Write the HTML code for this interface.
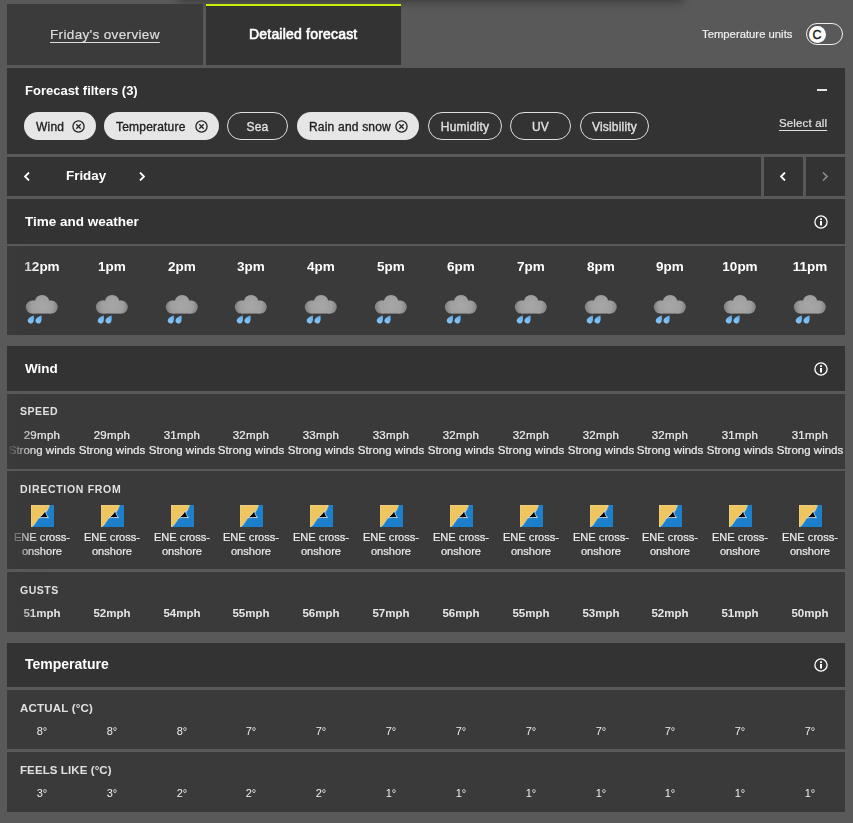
<!DOCTYPE html>
<html><head><meta charset="utf-8"><title>Detailed forecast</title><style>
*{box-sizing:border-box;margin:0;padding:0}
html,body{width:853px;height:823px;overflow:hidden;background:#595959;font-family:"Liberation Sans", sans-serif;}
body{position:relative}
.t,.c,.chip{will-change:transform}
.rs{-webkit-text-stroke:0.2px currentColor}
.a{position:absolute}
.dark{background:#333333}
.row{background:#3a3a3a}
.t{position:absolute;white-space:nowrap;line-height:1}
.c{position:absolute;white-space:nowrap;line-height:1;text-align:center}
.lab{z-index:2}
.fade{z-index:1;position:absolute;left:7px;width:42px;background:linear-gradient(to right,rgba(58,58,58,0.95) 0px,rgba(58,58,58,0.78) 6px,rgba(58,58,58,0.55) 12px,rgba(58,58,58,0.3) 18px,rgba(58,58,58,0.13) 25px,rgba(58,58,58,0.04) 32px,rgba(58,58,58,0) 40px)}
.chip{position:absolute;top:112px;height:28px;border-radius:14px;font-size:12px;line-height:31px;letter-spacing:0.2px;white-space:nowrap;-webkit-text-stroke:0.35px currentColor}
.sel{background:#e6e6e6;color:#222}
.uns{border:1px solid #e0e0e0;color:#e0e0e0;text-align:center;line-height:29px}
</style></head><body>
<div class="a" style="left:178px;top:-12px;width:505px;height:12px;box-shadow:0 2px 8px rgba(0,0,0,0.35);background:#595959"></div>
<div class="a" style="left:7px;top:4px;width:196px;height:61px;background:#3b3b3b"></div>
<div class="t rs" style="left:50px;top:28px;font-size:13.5px;letter-spacing:0.35px;color:#dedede;text-decoration:underline;text-underline-offset:3px">Friday's overview</div>
<div class="a dark" style="left:206px;top:4px;width:195px;height:61px"></div>
<div class="a" style="left:206px;top:4px;width:195px;height:2px;background:#c8f000"></div>
<div class="t" style="left:249px;top:27px;font-size:14px;letter-spacing:0.2px;-webkit-text-stroke:0.6px #fff;color:#fff">Detailed forecast</div>
<div class="t rs" style="left:702px;top:29px;font-size:11.3px;color:#eee">Temperature units</div>
<div class="a" style="left:806px;top:23px;width:37px;height:22px;border:1.5px solid #eee;border-radius:11px"></div>
<div class="a" style="left:808.5px;top:25.5px;width:17px;height:17px;border-radius:50%;background:#fff;color:#222;font-size:12.5px;text-align:center;line-height:18px;-webkit-text-stroke:0.4px #222">C</div>
<div class="a dark" style="left:7px;top:68px;width:838px;height:86px"></div>
<div class="t" style="left:25px;top:84px;font-size:13px;color:#fff;font-weight:bold">Forecast filters (3)</div>
<div class="a" style="left:817px;top:89px;width:10px;height:2px;background:#e6e6e6"></div>
<div class="chip sel" style="left:24px;width:72px;padding-left:12px">Wind<svg width="13" height="13" viewBox="0 0 13 13" style="position:absolute;top:7.5px;right:11.5px"><circle cx="6.5" cy="6.5" r="5.6" fill="none" stroke="#222" stroke-width="1.3"/><path d="M4.3 4.3L8.7 8.7M8.7 4.3L4.3 8.7" stroke="#222" stroke-width="1.3"/></svg></div>
<div class="chip sel" style="left:104px;width:115px;padding-left:12px">Temperature<svg width="13" height="13" viewBox="0 0 13 13" style="position:absolute;top:7.5px;right:11.5px"><circle cx="6.5" cy="6.5" r="5.6" fill="none" stroke="#222" stroke-width="1.3"/><path d="M4.3 4.3L8.7 8.7M8.7 4.3L4.3 8.7" stroke="#222" stroke-width="1.3"/></svg></div>
<div class="chip uns" style="left:227px;width:61px">Sea</div>
<div class="chip sel" style="left:297px;width:122px;padding-left:12px">Rain and snow<svg width="13" height="13" viewBox="0 0 13 13" style="position:absolute;top:7.5px;right:11.5px"><circle cx="6.5" cy="6.5" r="5.6" fill="none" stroke="#222" stroke-width="1.3"/><path d="M4.3 4.3L8.7 8.7M8.7 4.3L4.3 8.7" stroke="#222" stroke-width="1.3"/></svg></div>
<div class="chip uns" style="left:428px;width:74px">Humidity</div>
<div class="chip uns" style="left:510px;width:61px">UV</div>
<div class="chip uns" style="left:580px;width:69px">Visibility</div>
<div class="t rs" style="left:779px;top:118px;font-size:11.5px;letter-spacing:0.15px;color:#e0e0e0;text-decoration:underline;text-underline-offset:3px">Select all</div>
<div class="a dark" style="left:7px;top:157px;width:754px;height:39px"></div>
<div class="a dark" style="left:764px;top:157px;width:39px;height:39px"></div>
<div class="a dark" style="left:806px;top:157px;width:39px;height:39px"></div>
<svg class="a" style="left:24px;top:172px" width="6" height="9" viewBox="0 0 6 9"><path d="M5 0.5L1 4.5L5 8.5" fill="none" stroke="#fff" stroke-width="1.8"/></svg>
<div class="t" style="left:65.5px;top:169px;font-size:13.4px;color:#fff;font-weight:bold">Friday</div>
<svg class="a" style="left:139px;top:172px" width="6" height="9" viewBox="0 0 6 9"><path d="M1 0.5L5 4.5L1 8.5" fill="none" stroke="#fff" stroke-width="1.8"/></svg>
<svg class="a" style="left:779.8px;top:172.3px" width="6" height="9" viewBox="0 0 6 9"><path d="M5 0.5L1 4.5L5 8.5" fill="none" stroke="#fff" stroke-width="1.8"/></svg>
<svg class="a" style="left:821.8px;top:172.3px" width="6" height="9" viewBox="0 0 6 9"><path d="M1 0.5L5 4.5L1 8.5" fill="none" stroke="#8a8a8a" stroke-width="1.6"/></svg>
<div class="a dark" style="left:7px;top:199px;width:838px;height:45px"></div>
<div class="t" style="left:25px;top:215px;font-size:13.5px;color:#fff;font-weight:bold">Time and weather</div>
<svg class="a" style="left:814px;top:214.5px" width="14" height="14" viewBox="0 0 14 14"><circle cx="7" cy="7" r="6.1" fill="none" stroke="#fff" stroke-width="1.3"/><rect x="6" y="3.3" width="2" height="1.6" fill="#fff"/><rect x="6" y="5.9" width="2" height="4.6" fill="#fff"/></svg>
<div class="a row" style="left:7px;top:246px;width:838px;height:89px"></div>
<div class="c" style="left:6.92px;width:70px;top:260px;font-size:13.5px;color:#fff;font-weight:bold">12pm</div>
<svg width="36" height="32" viewBox="0 0 36 32" class="a" style="left:24.92px;top:294px;z-index:2">
<defs><radialGradient id="cg0" gradientUnits="userSpaceOnUse" cx="17" cy="12" r="17"><stop offset="0" stop-color="#a8a8a8"/><stop offset="0.65" stop-color="#9e9e9e"/><stop offset="1" stop-color="#7a7a7a"/></radialGradient>
<linearGradient id="dg0" x1="0" y1="0" x2="0" y2="1"><stop offset="0" stop-color="#5eaaec"/><stop offset="1" stop-color="#8ac6f4"/></linearGradient></defs>
<g fill="url(#cg0)"><circle cx="7.3" cy="13.1" r="6.5"/><circle cx="26.3" cy="13.1" r="6.5"/><circle cx="17.1" cy="8.3" r="7.4"/><rect x="7.3" y="6.6" width="19" height="13"/></g>
<path d="M0 -5.8 C0.9 -4 2.9 -2.3 2.9 0.3 A2.9 2.9 0 0 1 -2.9 0.3 C-2.9 -2.3 -0.9 -4 0 -5.8Z" fill="url(#dg0)" transform="translate(5.9 26.3) rotate(30)"/>
<path d="M0 -5.8 C0.9 -4 2.9 -2.3 2.9 0.3 A2.9 2.9 0 0 1 -2.9 0.3 C-2.9 -2.3 -0.9 -4 0 -5.8Z" fill="url(#dg0)" transform="translate(13.6 26.3) rotate(30)"/>
</svg>
<div class="c" style="left:76.75px;width:70px;top:260px;font-size:13.5px;color:#fff;font-weight:bold">1pm</div>
<svg width="36" height="32" viewBox="0 0 36 32" class="a" style="left:94.75px;top:294px;z-index:2">
<defs><radialGradient id="cg1" gradientUnits="userSpaceOnUse" cx="17" cy="12" r="17"><stop offset="0" stop-color="#a8a8a8"/><stop offset="0.65" stop-color="#9e9e9e"/><stop offset="1" stop-color="#7a7a7a"/></radialGradient>
<linearGradient id="dg1" x1="0" y1="0" x2="0" y2="1"><stop offset="0" stop-color="#5eaaec"/><stop offset="1" stop-color="#8ac6f4"/></linearGradient></defs>
<g fill="url(#cg1)"><circle cx="7.3" cy="13.1" r="6.5"/><circle cx="26.3" cy="13.1" r="6.5"/><circle cx="17.1" cy="8.3" r="7.4"/><rect x="7.3" y="6.6" width="19" height="13"/></g>
<path d="M0 -5.8 C0.9 -4 2.9 -2.3 2.9 0.3 A2.9 2.9 0 0 1 -2.9 0.3 C-2.9 -2.3 -0.9 -4 0 -5.8Z" fill="url(#dg1)" transform="translate(5.9 26.3) rotate(30)"/>
<path d="M0 -5.8 C0.9 -4 2.9 -2.3 2.9 0.3 A2.9 2.9 0 0 1 -2.9 0.3 C-2.9 -2.3 -0.9 -4 0 -5.8Z" fill="url(#dg1)" transform="translate(13.6 26.3) rotate(30)"/>
</svg>
<div class="c" style="left:146.58px;width:70px;top:260px;font-size:13.5px;color:#fff;font-weight:bold">2pm</div>
<svg width="36" height="32" viewBox="0 0 36 32" class="a" style="left:164.58px;top:294px;z-index:2">
<defs><radialGradient id="cg2" gradientUnits="userSpaceOnUse" cx="17" cy="12" r="17"><stop offset="0" stop-color="#a8a8a8"/><stop offset="0.65" stop-color="#9e9e9e"/><stop offset="1" stop-color="#7a7a7a"/></radialGradient>
<linearGradient id="dg2" x1="0" y1="0" x2="0" y2="1"><stop offset="0" stop-color="#5eaaec"/><stop offset="1" stop-color="#8ac6f4"/></linearGradient></defs>
<g fill="url(#cg2)"><circle cx="7.3" cy="13.1" r="6.5"/><circle cx="26.3" cy="13.1" r="6.5"/><circle cx="17.1" cy="8.3" r="7.4"/><rect x="7.3" y="6.6" width="19" height="13"/></g>
<path d="M0 -5.8 C0.9 -4 2.9 -2.3 2.9 0.3 A2.9 2.9 0 0 1 -2.9 0.3 C-2.9 -2.3 -0.9 -4 0 -5.8Z" fill="url(#dg2)" transform="translate(5.9 26.3) rotate(30)"/>
<path d="M0 -5.8 C0.9 -4 2.9 -2.3 2.9 0.3 A2.9 2.9 0 0 1 -2.9 0.3 C-2.9 -2.3 -0.9 -4 0 -5.8Z" fill="url(#dg2)" transform="translate(13.6 26.3) rotate(30)"/>
</svg>
<div class="c" style="left:216.42px;width:70px;top:260px;font-size:13.5px;color:#fff;font-weight:bold">3pm</div>
<svg width="36" height="32" viewBox="0 0 36 32" class="a" style="left:234.42px;top:294px;z-index:2">
<defs><radialGradient id="cg3" gradientUnits="userSpaceOnUse" cx="17" cy="12" r="17"><stop offset="0" stop-color="#a8a8a8"/><stop offset="0.65" stop-color="#9e9e9e"/><stop offset="1" stop-color="#7a7a7a"/></radialGradient>
<linearGradient id="dg3" x1="0" y1="0" x2="0" y2="1"><stop offset="0" stop-color="#5eaaec"/><stop offset="1" stop-color="#8ac6f4"/></linearGradient></defs>
<g fill="url(#cg3)"><circle cx="7.3" cy="13.1" r="6.5"/><circle cx="26.3" cy="13.1" r="6.5"/><circle cx="17.1" cy="8.3" r="7.4"/><rect x="7.3" y="6.6" width="19" height="13"/></g>
<path d="M0 -5.8 C0.9 -4 2.9 -2.3 2.9 0.3 A2.9 2.9 0 0 1 -2.9 0.3 C-2.9 -2.3 -0.9 -4 0 -5.8Z" fill="url(#dg3)" transform="translate(5.9 26.3) rotate(30)"/>
<path d="M0 -5.8 C0.9 -4 2.9 -2.3 2.9 0.3 A2.9 2.9 0 0 1 -2.9 0.3 C-2.9 -2.3 -0.9 -4 0 -5.8Z" fill="url(#dg3)" transform="translate(13.6 26.3) rotate(30)"/>
</svg>
<div class="c" style="left:286.25px;width:70px;top:260px;font-size:13.5px;color:#fff;font-weight:bold">4pm</div>
<svg width="36" height="32" viewBox="0 0 36 32" class="a" style="left:304.25px;top:294px;z-index:2">
<defs><radialGradient id="cg4" gradientUnits="userSpaceOnUse" cx="17" cy="12" r="17"><stop offset="0" stop-color="#a8a8a8"/><stop offset="0.65" stop-color="#9e9e9e"/><stop offset="1" stop-color="#7a7a7a"/></radialGradient>
<linearGradient id="dg4" x1="0" y1="0" x2="0" y2="1"><stop offset="0" stop-color="#5eaaec"/><stop offset="1" stop-color="#8ac6f4"/></linearGradient></defs>
<g fill="url(#cg4)"><circle cx="7.3" cy="13.1" r="6.5"/><circle cx="26.3" cy="13.1" r="6.5"/><circle cx="17.1" cy="8.3" r="7.4"/><rect x="7.3" y="6.6" width="19" height="13"/></g>
<path d="M0 -5.8 C0.9 -4 2.9 -2.3 2.9 0.3 A2.9 2.9 0 0 1 -2.9 0.3 C-2.9 -2.3 -0.9 -4 0 -5.8Z" fill="url(#dg4)" transform="translate(5.9 26.3) rotate(30)"/>
<path d="M0 -5.8 C0.9 -4 2.9 -2.3 2.9 0.3 A2.9 2.9 0 0 1 -2.9 0.3 C-2.9 -2.3 -0.9 -4 0 -5.8Z" fill="url(#dg4)" transform="translate(13.6 26.3) rotate(30)"/>
</svg>
<div class="c" style="left:356.08px;width:70px;top:260px;font-size:13.5px;color:#fff;font-weight:bold">5pm</div>
<svg width="36" height="32" viewBox="0 0 36 32" class="a" style="left:374.08px;top:294px;z-index:2">
<defs><radialGradient id="cg5" gradientUnits="userSpaceOnUse" cx="17" cy="12" r="17"><stop offset="0" stop-color="#a8a8a8"/><stop offset="0.65" stop-color="#9e9e9e"/><stop offset="1" stop-color="#7a7a7a"/></radialGradient>
<linearGradient id="dg5" x1="0" y1="0" x2="0" y2="1"><stop offset="0" stop-color="#5eaaec"/><stop offset="1" stop-color="#8ac6f4"/></linearGradient></defs>
<g fill="url(#cg5)"><circle cx="7.3" cy="13.1" r="6.5"/><circle cx="26.3" cy="13.1" r="6.5"/><circle cx="17.1" cy="8.3" r="7.4"/><rect x="7.3" y="6.6" width="19" height="13"/></g>
<path d="M0 -5.8 C0.9 -4 2.9 -2.3 2.9 0.3 A2.9 2.9 0 0 1 -2.9 0.3 C-2.9 -2.3 -0.9 -4 0 -5.8Z" fill="url(#dg5)" transform="translate(5.9 26.3) rotate(30)"/>
<path d="M0 -5.8 C0.9 -4 2.9 -2.3 2.9 0.3 A2.9 2.9 0 0 1 -2.9 0.3 C-2.9 -2.3 -0.9 -4 0 -5.8Z" fill="url(#dg5)" transform="translate(13.6 26.3) rotate(30)"/>
</svg>
<div class="c" style="left:425.92px;width:70px;top:260px;font-size:13.5px;color:#fff;font-weight:bold">6pm</div>
<svg width="36" height="32" viewBox="0 0 36 32" class="a" style="left:443.92px;top:294px;z-index:2">
<defs><radialGradient id="cg6" gradientUnits="userSpaceOnUse" cx="17" cy="12" r="17"><stop offset="0" stop-color="#a8a8a8"/><stop offset="0.65" stop-color="#9e9e9e"/><stop offset="1" stop-color="#7a7a7a"/></radialGradient>
<linearGradient id="dg6" x1="0" y1="0" x2="0" y2="1"><stop offset="0" stop-color="#5eaaec"/><stop offset="1" stop-color="#8ac6f4"/></linearGradient></defs>
<g fill="url(#cg6)"><circle cx="7.3" cy="13.1" r="6.5"/><circle cx="26.3" cy="13.1" r="6.5"/><circle cx="17.1" cy="8.3" r="7.4"/><rect x="7.3" y="6.6" width="19" height="13"/></g>
<path d="M0 -5.8 C0.9 -4 2.9 -2.3 2.9 0.3 A2.9 2.9 0 0 1 -2.9 0.3 C-2.9 -2.3 -0.9 -4 0 -5.8Z" fill="url(#dg6)" transform="translate(5.9 26.3) rotate(30)"/>
<path d="M0 -5.8 C0.9 -4 2.9 -2.3 2.9 0.3 A2.9 2.9 0 0 1 -2.9 0.3 C-2.9 -2.3 -0.9 -4 0 -5.8Z" fill="url(#dg6)" transform="translate(13.6 26.3) rotate(30)"/>
</svg>
<div class="c" style="left:495.75px;width:70px;top:260px;font-size:13.5px;color:#fff;font-weight:bold">7pm</div>
<svg width="36" height="32" viewBox="0 0 36 32" class="a" style="left:513.75px;top:294px;z-index:2">
<defs><radialGradient id="cg7" gradientUnits="userSpaceOnUse" cx="17" cy="12" r="17"><stop offset="0" stop-color="#a8a8a8"/><stop offset="0.65" stop-color="#9e9e9e"/><stop offset="1" stop-color="#7a7a7a"/></radialGradient>
<linearGradient id="dg7" x1="0" y1="0" x2="0" y2="1"><stop offset="0" stop-color="#5eaaec"/><stop offset="1" stop-color="#8ac6f4"/></linearGradient></defs>
<g fill="url(#cg7)"><circle cx="7.3" cy="13.1" r="6.5"/><circle cx="26.3" cy="13.1" r="6.5"/><circle cx="17.1" cy="8.3" r="7.4"/><rect x="7.3" y="6.6" width="19" height="13"/></g>
<path d="M0 -5.8 C0.9 -4 2.9 -2.3 2.9 0.3 A2.9 2.9 0 0 1 -2.9 0.3 C-2.9 -2.3 -0.9 -4 0 -5.8Z" fill="url(#dg7)" transform="translate(5.9 26.3) rotate(30)"/>
<path d="M0 -5.8 C0.9 -4 2.9 -2.3 2.9 0.3 A2.9 2.9 0 0 1 -2.9 0.3 C-2.9 -2.3 -0.9 -4 0 -5.8Z" fill="url(#dg7)" transform="translate(13.6 26.3) rotate(30)"/>
</svg>
<div class="c" style="left:565.58px;width:70px;top:260px;font-size:13.5px;color:#fff;font-weight:bold">8pm</div>
<svg width="36" height="32" viewBox="0 0 36 32" class="a" style="left:583.58px;top:294px;z-index:2">
<defs><radialGradient id="cg8" gradientUnits="userSpaceOnUse" cx="17" cy="12" r="17"><stop offset="0" stop-color="#a8a8a8"/><stop offset="0.65" stop-color="#9e9e9e"/><stop offset="1" stop-color="#7a7a7a"/></radialGradient>
<linearGradient id="dg8" x1="0" y1="0" x2="0" y2="1"><stop offset="0" stop-color="#5eaaec"/><stop offset="1" stop-color="#8ac6f4"/></linearGradient></defs>
<g fill="url(#cg8)"><circle cx="7.3" cy="13.1" r="6.5"/><circle cx="26.3" cy="13.1" r="6.5"/><circle cx="17.1" cy="8.3" r="7.4"/><rect x="7.3" y="6.6" width="19" height="13"/></g>
<path d="M0 -5.8 C0.9 -4 2.9 -2.3 2.9 0.3 A2.9 2.9 0 0 1 -2.9 0.3 C-2.9 -2.3 -0.9 -4 0 -5.8Z" fill="url(#dg8)" transform="translate(5.9 26.3) rotate(30)"/>
<path d="M0 -5.8 C0.9 -4 2.9 -2.3 2.9 0.3 A2.9 2.9 0 0 1 -2.9 0.3 C-2.9 -2.3 -0.9 -4 0 -5.8Z" fill="url(#dg8)" transform="translate(13.6 26.3) rotate(30)"/>
</svg>
<div class="c" style="left:635.42px;width:70px;top:260px;font-size:13.5px;color:#fff;font-weight:bold">9pm</div>
<svg width="36" height="32" viewBox="0 0 36 32" class="a" style="left:653.42px;top:294px;z-index:2">
<defs><radialGradient id="cg9" gradientUnits="userSpaceOnUse" cx="17" cy="12" r="17"><stop offset="0" stop-color="#a8a8a8"/><stop offset="0.65" stop-color="#9e9e9e"/><stop offset="1" stop-color="#7a7a7a"/></radialGradient>
<linearGradient id="dg9" x1="0" y1="0" x2="0" y2="1"><stop offset="0" stop-color="#5eaaec"/><stop offset="1" stop-color="#8ac6f4"/></linearGradient></defs>
<g fill="url(#cg9)"><circle cx="7.3" cy="13.1" r="6.5"/><circle cx="26.3" cy="13.1" r="6.5"/><circle cx="17.1" cy="8.3" r="7.4"/><rect x="7.3" y="6.6" width="19" height="13"/></g>
<path d="M0 -5.8 C0.9 -4 2.9 -2.3 2.9 0.3 A2.9 2.9 0 0 1 -2.9 0.3 C-2.9 -2.3 -0.9 -4 0 -5.8Z" fill="url(#dg9)" transform="translate(5.9 26.3) rotate(30)"/>
<path d="M0 -5.8 C0.9 -4 2.9 -2.3 2.9 0.3 A2.9 2.9 0 0 1 -2.9 0.3 C-2.9 -2.3 -0.9 -4 0 -5.8Z" fill="url(#dg9)" transform="translate(13.6 26.3) rotate(30)"/>
</svg>
<div class="c" style="left:705.25px;width:70px;top:260px;font-size:13.5px;color:#fff;font-weight:bold">10pm</div>
<svg width="36" height="32" viewBox="0 0 36 32" class="a" style="left:723.25px;top:294px;z-index:2">
<defs><radialGradient id="cg10" gradientUnits="userSpaceOnUse" cx="17" cy="12" r="17"><stop offset="0" stop-color="#a8a8a8"/><stop offset="0.65" stop-color="#9e9e9e"/><stop offset="1" stop-color="#7a7a7a"/></radialGradient>
<linearGradient id="dg10" x1="0" y1="0" x2="0" y2="1"><stop offset="0" stop-color="#5eaaec"/><stop offset="1" stop-color="#8ac6f4"/></linearGradient></defs>
<g fill="url(#cg10)"><circle cx="7.3" cy="13.1" r="6.5"/><circle cx="26.3" cy="13.1" r="6.5"/><circle cx="17.1" cy="8.3" r="7.4"/><rect x="7.3" y="6.6" width="19" height="13"/></g>
<path d="M0 -5.8 C0.9 -4 2.9 -2.3 2.9 0.3 A2.9 2.9 0 0 1 -2.9 0.3 C-2.9 -2.3 -0.9 -4 0 -5.8Z" fill="url(#dg10)" transform="translate(5.9 26.3) rotate(30)"/>
<path d="M0 -5.8 C0.9 -4 2.9 -2.3 2.9 0.3 A2.9 2.9 0 0 1 -2.9 0.3 C-2.9 -2.3 -0.9 -4 0 -5.8Z" fill="url(#dg10)" transform="translate(13.6 26.3) rotate(30)"/>
</svg>
<div class="c" style="left:775.08px;width:70px;top:260px;font-size:13.5px;color:#fff;font-weight:bold">11pm</div>
<svg width="36" height="32" viewBox="0 0 36 32" class="a" style="left:793.08px;top:294px;z-index:2">
<defs><radialGradient id="cg11" gradientUnits="userSpaceOnUse" cx="17" cy="12" r="17"><stop offset="0" stop-color="#a8a8a8"/><stop offset="0.65" stop-color="#9e9e9e"/><stop offset="1" stop-color="#7a7a7a"/></radialGradient>
<linearGradient id="dg11" x1="0" y1="0" x2="0" y2="1"><stop offset="0" stop-color="#5eaaec"/><stop offset="1" stop-color="#8ac6f4"/></linearGradient></defs>
<g fill="url(#cg11)"><circle cx="7.3" cy="13.1" r="6.5"/><circle cx="26.3" cy="13.1" r="6.5"/><circle cx="17.1" cy="8.3" r="7.4"/><rect x="7.3" y="6.6" width="19" height="13"/></g>
<path d="M0 -5.8 C0.9 -4 2.9 -2.3 2.9 0.3 A2.9 2.9 0 0 1 -2.9 0.3 C-2.9 -2.3 -0.9 -4 0 -5.8Z" fill="url(#dg11)" transform="translate(5.9 26.3) rotate(30)"/>
<path d="M0 -5.8 C0.9 -4 2.9 -2.3 2.9 0.3 A2.9 2.9 0 0 1 -2.9 0.3 C-2.9 -2.3 -0.9 -4 0 -5.8Z" fill="url(#dg11)" transform="translate(13.6 26.3) rotate(30)"/>
</svg>
<div class="fade" style="top:246px;height:89px"></div>
<div class="a dark" style="left:7px;top:346px;width:838px;height:45px"></div>
<div class="t" style="left:25px;top:362px;font-size:13.5px;color:#fff;font-weight:bold">Wind</div>
<svg class="a" style="left:814px;top:361.5px" width="14" height="14" viewBox="0 0 14 14"><circle cx="7" cy="7" r="6.1" fill="none" stroke="#fff" stroke-width="1.3"/><rect x="6" y="3.3" width="2" height="1.6" fill="#fff"/><rect x="6" y="5.9" width="2" height="4.6" fill="#fff"/></svg>
<div class="a row" style="left:7px;top:394px;width:838px;height:75px"></div>
<div class="t lab" style="left:19.5px;top:406px;font-size:10.5px;color:#e0e0e0;font-weight:bold;letter-spacing:0.5px">SPEED</div>
<div class="c rs" style="left:6.92px;width:70px;top:430px;font-size:11.5px;color:#eee"><span style="letter-spacing:0.3px">29mph</span><br><span style="display:inline-block;margin-top:3px">Strong winds</span></div>
<div class="c rs" style="left:76.75px;width:70px;top:430px;font-size:11.5px;color:#eee"><span style="letter-spacing:0.3px">29mph</span><br><span style="display:inline-block;margin-top:3px">Strong winds</span></div>
<div class="c rs" style="left:146.58px;width:70px;top:430px;font-size:11.5px;color:#eee"><span style="letter-spacing:0.3px">31mph</span><br><span style="display:inline-block;margin-top:3px">Strong winds</span></div>
<div class="c rs" style="left:216.42px;width:70px;top:430px;font-size:11.5px;color:#eee"><span style="letter-spacing:0.3px">32mph</span><br><span style="display:inline-block;margin-top:3px">Strong winds</span></div>
<div class="c rs" style="left:286.25px;width:70px;top:430px;font-size:11.5px;color:#eee"><span style="letter-spacing:0.3px">33mph</span><br><span style="display:inline-block;margin-top:3px">Strong winds</span></div>
<div class="c rs" style="left:356.08px;width:70px;top:430px;font-size:11.5px;color:#eee"><span style="letter-spacing:0.3px">33mph</span><br><span style="display:inline-block;margin-top:3px">Strong winds</span></div>
<div class="c rs" style="left:425.92px;width:70px;top:430px;font-size:11.5px;color:#eee"><span style="letter-spacing:0.3px">32mph</span><br><span style="display:inline-block;margin-top:3px">Strong winds</span></div>
<div class="c rs" style="left:495.75px;width:70px;top:430px;font-size:11.5px;color:#eee"><span style="letter-spacing:0.3px">32mph</span><br><span style="display:inline-block;margin-top:3px">Strong winds</span></div>
<div class="c rs" style="left:565.58px;width:70px;top:430px;font-size:11.5px;color:#eee"><span style="letter-spacing:0.3px">32mph</span><br><span style="display:inline-block;margin-top:3px">Strong winds</span></div>
<div class="c rs" style="left:635.42px;width:70px;top:430px;font-size:11.5px;color:#eee"><span style="letter-spacing:0.3px">32mph</span><br><span style="display:inline-block;margin-top:3px">Strong winds</span></div>
<div class="c rs" style="left:705.25px;width:70px;top:430px;font-size:11.5px;color:#eee"><span style="letter-spacing:0.3px">31mph</span><br><span style="display:inline-block;margin-top:3px">Strong winds</span></div>
<div class="c rs" style="left:775.08px;width:70px;top:430px;font-size:11.5px;color:#eee"><span style="letter-spacing:0.3px">31mph</span><br><span style="display:inline-block;margin-top:3px">Strong winds</span></div>
<div class="fade" style="top:394px;height:75px"></div>
<div class="a row" style="left:7px;top:471px;width:838px;height:98px"></div>
<div class="t lab" style="left:19.5px;top:484px;font-size:10.5px;color:#e0e0e0;font-weight:bold;letter-spacing:0.7px">DIRECTION FROM</div>
<svg class="a" style="left:30.92px;top:505px;z-index:2" width="23" height="22" viewBox="0 0 23 22" preserveAspectRatio="none">
<rect width="23" height="22" fill="#1c80cd"/>
<path d="M0 0H18.5C17.6 4 16.3 6 14.2 8C11.5 10.5 9.5 11.5 7.8 13.2C6 15.2 4.5 19 1 22H0Z" fill="#eec55f" stroke="#e8e8e8" stroke-width="0.6" stroke-dasharray="1 0.6"/><path d="M9 22C12 19 15 17 20 15M14 22C17 20 20 18 23 17" fill="none" stroke="#156fb5" stroke-width="0.5" opacity="0.7"/>
<path d="M14.4 5.8Q12 10 7.8 12.8Q12.5 12.2 17.4 12.6Q15 10 14.4 5.8Z" fill="#000" stroke="#eee" stroke-width="0.8" stroke-linejoin="round"/>
</svg>
<div class="c rs" style="left:6.92px;width:70px;top:530px;font-size:11.1px;color:#eee;line-height:14px">ENE cross-<br>onshore</div>
<svg class="a" style="left:100.75px;top:505px;z-index:2" width="23" height="22" viewBox="0 0 23 22" preserveAspectRatio="none">
<rect width="23" height="22" fill="#1c80cd"/>
<path d="M0 0H18.5C17.6 4 16.3 6 14.2 8C11.5 10.5 9.5 11.5 7.8 13.2C6 15.2 4.5 19 1 22H0Z" fill="#eec55f" stroke="#e8e8e8" stroke-width="0.6" stroke-dasharray="1 0.6"/><path d="M9 22C12 19 15 17 20 15M14 22C17 20 20 18 23 17" fill="none" stroke="#156fb5" stroke-width="0.5" opacity="0.7"/>
<path d="M14.4 5.8Q12 10 7.8 12.8Q12.5 12.2 17.4 12.6Q15 10 14.4 5.8Z" fill="#000" stroke="#eee" stroke-width="0.8" stroke-linejoin="round"/>
</svg>
<div class="c rs" style="left:76.75px;width:70px;top:530px;font-size:11.1px;color:#eee;line-height:14px">ENE cross-<br>onshore</div>
<svg class="a" style="left:170.58px;top:505px;z-index:2" width="23" height="22" viewBox="0 0 23 22" preserveAspectRatio="none">
<rect width="23" height="22" fill="#1c80cd"/>
<path d="M0 0H18.5C17.6 4 16.3 6 14.2 8C11.5 10.5 9.5 11.5 7.8 13.2C6 15.2 4.5 19 1 22H0Z" fill="#eec55f" stroke="#e8e8e8" stroke-width="0.6" stroke-dasharray="1 0.6"/><path d="M9 22C12 19 15 17 20 15M14 22C17 20 20 18 23 17" fill="none" stroke="#156fb5" stroke-width="0.5" opacity="0.7"/>
<path d="M14.4 5.8Q12 10 7.8 12.8Q12.5 12.2 17.4 12.6Q15 10 14.4 5.8Z" fill="#000" stroke="#eee" stroke-width="0.8" stroke-linejoin="round"/>
</svg>
<div class="c rs" style="left:146.58px;width:70px;top:530px;font-size:11.1px;color:#eee;line-height:14px">ENE cross-<br>onshore</div>
<svg class="a" style="left:240.42px;top:505px;z-index:2" width="23" height="22" viewBox="0 0 23 22" preserveAspectRatio="none">
<rect width="23" height="22" fill="#1c80cd"/>
<path d="M0 0H18.5C17.6 4 16.3 6 14.2 8C11.5 10.5 9.5 11.5 7.8 13.2C6 15.2 4.5 19 1 22H0Z" fill="#eec55f" stroke="#e8e8e8" stroke-width="0.6" stroke-dasharray="1 0.6"/><path d="M9 22C12 19 15 17 20 15M14 22C17 20 20 18 23 17" fill="none" stroke="#156fb5" stroke-width="0.5" opacity="0.7"/>
<path d="M14.4 5.8Q12 10 7.8 12.8Q12.5 12.2 17.4 12.6Q15 10 14.4 5.8Z" fill="#000" stroke="#eee" stroke-width="0.8" stroke-linejoin="round"/>
</svg>
<div class="c rs" style="left:216.42px;width:70px;top:530px;font-size:11.1px;color:#eee;line-height:14px">ENE cross-<br>onshore</div>
<svg class="a" style="left:310.25px;top:505px;z-index:2" width="23" height="22" viewBox="0 0 23 22" preserveAspectRatio="none">
<rect width="23" height="22" fill="#1c80cd"/>
<path d="M0 0H18.5C17.6 4 16.3 6 14.2 8C11.5 10.5 9.5 11.5 7.8 13.2C6 15.2 4.5 19 1 22H0Z" fill="#eec55f" stroke="#e8e8e8" stroke-width="0.6" stroke-dasharray="1 0.6"/><path d="M9 22C12 19 15 17 20 15M14 22C17 20 20 18 23 17" fill="none" stroke="#156fb5" stroke-width="0.5" opacity="0.7"/>
<path d="M14.4 5.8Q12 10 7.8 12.8Q12.5 12.2 17.4 12.6Q15 10 14.4 5.8Z" fill="#000" stroke="#eee" stroke-width="0.8" stroke-linejoin="round"/>
</svg>
<div class="c rs" style="left:286.25px;width:70px;top:530px;font-size:11.1px;color:#eee;line-height:14px">ENE cross-<br>onshore</div>
<svg class="a" style="left:380.08px;top:505px;z-index:2" width="23" height="22" viewBox="0 0 23 22" preserveAspectRatio="none">
<rect width="23" height="22" fill="#1c80cd"/>
<path d="M0 0H18.5C17.6 4 16.3 6 14.2 8C11.5 10.5 9.5 11.5 7.8 13.2C6 15.2 4.5 19 1 22H0Z" fill="#eec55f" stroke="#e8e8e8" stroke-width="0.6" stroke-dasharray="1 0.6"/><path d="M9 22C12 19 15 17 20 15M14 22C17 20 20 18 23 17" fill="none" stroke="#156fb5" stroke-width="0.5" opacity="0.7"/>
<path d="M14.4 5.8Q12 10 7.8 12.8Q12.5 12.2 17.4 12.6Q15 10 14.4 5.8Z" fill="#000" stroke="#eee" stroke-width="0.8" stroke-linejoin="round"/>
</svg>
<div class="c rs" style="left:356.08px;width:70px;top:530px;font-size:11.1px;color:#eee;line-height:14px">ENE cross-<br>onshore</div>
<svg class="a" style="left:449.92px;top:505px;z-index:2" width="23" height="22" viewBox="0 0 23 22" preserveAspectRatio="none">
<rect width="23" height="22" fill="#1c80cd"/>
<path d="M0 0H18.5C17.6 4 16.3 6 14.2 8C11.5 10.5 9.5 11.5 7.8 13.2C6 15.2 4.5 19 1 22H0Z" fill="#eec55f" stroke="#e8e8e8" stroke-width="0.6" stroke-dasharray="1 0.6"/><path d="M9 22C12 19 15 17 20 15M14 22C17 20 20 18 23 17" fill="none" stroke="#156fb5" stroke-width="0.5" opacity="0.7"/>
<path d="M14.4 5.8Q12 10 7.8 12.8Q12.5 12.2 17.4 12.6Q15 10 14.4 5.8Z" fill="#000" stroke="#eee" stroke-width="0.8" stroke-linejoin="round"/>
</svg>
<div class="c rs" style="left:425.92px;width:70px;top:530px;font-size:11.1px;color:#eee;line-height:14px">ENE cross-<br>onshore</div>
<svg class="a" style="left:519.75px;top:505px;z-index:2" width="23" height="22" viewBox="0 0 23 22" preserveAspectRatio="none">
<rect width="23" height="22" fill="#1c80cd"/>
<path d="M0 0H18.5C17.6 4 16.3 6 14.2 8C11.5 10.5 9.5 11.5 7.8 13.2C6 15.2 4.5 19 1 22H0Z" fill="#eec55f" stroke="#e8e8e8" stroke-width="0.6" stroke-dasharray="1 0.6"/><path d="M9 22C12 19 15 17 20 15M14 22C17 20 20 18 23 17" fill="none" stroke="#156fb5" stroke-width="0.5" opacity="0.7"/>
<path d="M14.4 5.8Q12 10 7.8 12.8Q12.5 12.2 17.4 12.6Q15 10 14.4 5.8Z" fill="#000" stroke="#eee" stroke-width="0.8" stroke-linejoin="round"/>
</svg>
<div class="c rs" style="left:495.75px;width:70px;top:530px;font-size:11.1px;color:#eee;line-height:14px">ENE cross-<br>onshore</div>
<svg class="a" style="left:589.58px;top:505px;z-index:2" width="23" height="22" viewBox="0 0 23 22" preserveAspectRatio="none">
<rect width="23" height="22" fill="#1c80cd"/>
<path d="M0 0H18.5C17.6 4 16.3 6 14.2 8C11.5 10.5 9.5 11.5 7.8 13.2C6 15.2 4.5 19 1 22H0Z" fill="#eec55f" stroke="#e8e8e8" stroke-width="0.6" stroke-dasharray="1 0.6"/><path d="M9 22C12 19 15 17 20 15M14 22C17 20 20 18 23 17" fill="none" stroke="#156fb5" stroke-width="0.5" opacity="0.7"/>
<path d="M14.4 5.8Q12 10 7.8 12.8Q12.5 12.2 17.4 12.6Q15 10 14.4 5.8Z" fill="#000" stroke="#eee" stroke-width="0.8" stroke-linejoin="round"/>
</svg>
<div class="c rs" style="left:565.58px;width:70px;top:530px;font-size:11.1px;color:#eee;line-height:14px">ENE cross-<br>onshore</div>
<svg class="a" style="left:659.42px;top:505px;z-index:2" width="23" height="22" viewBox="0 0 23 22" preserveAspectRatio="none">
<rect width="23" height="22" fill="#1c80cd"/>
<path d="M0 0H18.5C17.6 4 16.3 6 14.2 8C11.5 10.5 9.5 11.5 7.8 13.2C6 15.2 4.5 19 1 22H0Z" fill="#eec55f" stroke="#e8e8e8" stroke-width="0.6" stroke-dasharray="1 0.6"/><path d="M9 22C12 19 15 17 20 15M14 22C17 20 20 18 23 17" fill="none" stroke="#156fb5" stroke-width="0.5" opacity="0.7"/>
<path d="M14.4 5.8Q12 10 7.8 12.8Q12.5 12.2 17.4 12.6Q15 10 14.4 5.8Z" fill="#000" stroke="#eee" stroke-width="0.8" stroke-linejoin="round"/>
</svg>
<div class="c rs" style="left:635.42px;width:70px;top:530px;font-size:11.1px;color:#eee;line-height:14px">ENE cross-<br>onshore</div>
<svg class="a" style="left:729.25px;top:505px;z-index:2" width="23" height="22" viewBox="0 0 23 22" preserveAspectRatio="none">
<rect width="23" height="22" fill="#1c80cd"/>
<path d="M0 0H18.5C17.6 4 16.3 6 14.2 8C11.5 10.5 9.5 11.5 7.8 13.2C6 15.2 4.5 19 1 22H0Z" fill="#eec55f" stroke="#e8e8e8" stroke-width="0.6" stroke-dasharray="1 0.6"/><path d="M9 22C12 19 15 17 20 15M14 22C17 20 20 18 23 17" fill="none" stroke="#156fb5" stroke-width="0.5" opacity="0.7"/>
<path d="M14.4 5.8Q12 10 7.8 12.8Q12.5 12.2 17.4 12.6Q15 10 14.4 5.8Z" fill="#000" stroke="#eee" stroke-width="0.8" stroke-linejoin="round"/>
</svg>
<div class="c rs" style="left:705.25px;width:70px;top:530px;font-size:11.1px;color:#eee;line-height:14px">ENE cross-<br>onshore</div>
<svg class="a" style="left:799.08px;top:505px;z-index:2" width="23" height="22" viewBox="0 0 23 22" preserveAspectRatio="none">
<rect width="23" height="22" fill="#1c80cd"/>
<path d="M0 0H18.5C17.6 4 16.3 6 14.2 8C11.5 10.5 9.5 11.5 7.8 13.2C6 15.2 4.5 19 1 22H0Z" fill="#eec55f" stroke="#e8e8e8" stroke-width="0.6" stroke-dasharray="1 0.6"/><path d="M9 22C12 19 15 17 20 15M14 22C17 20 20 18 23 17" fill="none" stroke="#156fb5" stroke-width="0.5" opacity="0.7"/>
<path d="M14.4 5.8Q12 10 7.8 12.8Q12.5 12.2 17.4 12.6Q15 10 14.4 5.8Z" fill="#000" stroke="#eee" stroke-width="0.8" stroke-linejoin="round"/>
</svg>
<div class="c rs" style="left:775.08px;width:70px;top:530px;font-size:11.1px;color:#eee;line-height:14px">ENE cross-<br>onshore</div>
<div class="fade" style="top:471px;height:98px"></div>
<div class="a row" style="left:7px;top:572px;width:838px;height:60px"></div>
<div class="t lab" style="left:19.5px;top:585px;font-size:10.5px;color:#e0e0e0;font-weight:bold;letter-spacing:0.5px">GUSTS</div>
<div class="c" style="left:6.92px;width:70px;top:608px;font-size:11.5px;color:#e6e6e6;font-weight:bold">51mph</div>
<div class="c" style="left:76.75px;width:70px;top:608px;font-size:11.5px;color:#e6e6e6;font-weight:bold">52mph</div>
<div class="c" style="left:146.58px;width:70px;top:608px;font-size:11.5px;color:#e6e6e6;font-weight:bold">54mph</div>
<div class="c" style="left:216.42px;width:70px;top:608px;font-size:11.5px;color:#e6e6e6;font-weight:bold">55mph</div>
<div class="c" style="left:286.25px;width:70px;top:608px;font-size:11.5px;color:#e6e6e6;font-weight:bold">56mph</div>
<div class="c" style="left:356.08px;width:70px;top:608px;font-size:11.5px;color:#e6e6e6;font-weight:bold">57mph</div>
<div class="c" style="left:425.92px;width:70px;top:608px;font-size:11.5px;color:#e6e6e6;font-weight:bold">56mph</div>
<div class="c" style="left:495.75px;width:70px;top:608px;font-size:11.5px;color:#e6e6e6;font-weight:bold">55mph</div>
<div class="c" style="left:565.58px;width:70px;top:608px;font-size:11.5px;color:#e6e6e6;font-weight:bold">53mph</div>
<div class="c" style="left:635.42px;width:70px;top:608px;font-size:11.5px;color:#e6e6e6;font-weight:bold">52mph</div>
<div class="c" style="left:705.25px;width:70px;top:608px;font-size:11.5px;color:#e6e6e6;font-weight:bold">51mph</div>
<div class="c" style="left:775.08px;width:70px;top:608px;font-size:11.5px;color:#e6e6e6;font-weight:bold">50mph</div>
<div class="fade" style="top:572px;height:60px"></div>
<div class="a dark" style="left:7px;top:643px;width:838px;height:44px"></div>
<div class="t" style="left:25px;top:656.5px;font-size:14px;color:#fff;font-weight:bold">Temperature</div>
<svg class="a" style="left:814px;top:658px" width="14" height="14" viewBox="0 0 14 14"><circle cx="7" cy="7" r="6.1" fill="none" stroke="#fff" stroke-width="1.3"/><rect x="6" y="3.3" width="2" height="1.6" fill="#fff"/><rect x="6" y="5.9" width="2" height="4.6" fill="#fff"/></svg>
<div class="a row" style="left:7px;top:690px;width:838px;height:59px"></div>
<div class="t lab" style="left:19.5px;top:703px;font-size:11.5px;letter-spacing:0.2px;color:#e0e0e0;font-weight:bold">ACTUAL (°C)</div>
<div class="c" style="left:6.92px;width:70px;top:726px;font-size:11px;color:#eee">8°</div>
<div class="c" style="left:76.75px;width:70px;top:726px;font-size:11px;color:#eee">8°</div>
<div class="c" style="left:146.58px;width:70px;top:726px;font-size:11px;color:#eee">8°</div>
<div class="c" style="left:216.42px;width:70px;top:726px;font-size:11px;color:#eee">7°</div>
<div class="c" style="left:286.25px;width:70px;top:726px;font-size:11px;color:#eee">7°</div>
<div class="c" style="left:356.08px;width:70px;top:726px;font-size:11px;color:#eee">7°</div>
<div class="c" style="left:425.92px;width:70px;top:726px;font-size:11px;color:#eee">7°</div>
<div class="c" style="left:495.75px;width:70px;top:726px;font-size:11px;color:#eee">7°</div>
<div class="c" style="left:565.58px;width:70px;top:726px;font-size:11px;color:#eee">7°</div>
<div class="c" style="left:635.42px;width:70px;top:726px;font-size:11px;color:#eee">7°</div>
<div class="c" style="left:705.25px;width:70px;top:726px;font-size:11px;color:#eee">7°</div>
<div class="c" style="left:775.08px;width:70px;top:726px;font-size:11px;color:#eee">7°</div>
<div class="a row" style="left:7px;top:752px;width:838px;height:60px"></div>
<div class="t lab" style="left:19.5px;top:765px;font-size:11.5px;letter-spacing:0.1px;color:#e0e0e0;font-weight:bold">FEELS LIKE (°C)</div>
<div class="c" style="left:6.92px;width:70px;top:788px;font-size:11px;color:#eee">3°</div>
<div class="c" style="left:76.75px;width:70px;top:788px;font-size:11px;color:#eee">3°</div>
<div class="c" style="left:146.58px;width:70px;top:788px;font-size:11px;color:#eee">2°</div>
<div class="c" style="left:216.42px;width:70px;top:788px;font-size:11px;color:#eee">2°</div>
<div class="c" style="left:286.25px;width:70px;top:788px;font-size:11px;color:#eee">2°</div>
<div class="c" style="left:356.08px;width:70px;top:788px;font-size:11px;color:#eee">1°</div>
<div class="c" style="left:425.92px;width:70px;top:788px;font-size:11px;color:#eee">1°</div>
<div class="c" style="left:495.75px;width:70px;top:788px;font-size:11px;color:#eee">1°</div>
<div class="c" style="left:565.58px;width:70px;top:788px;font-size:11px;color:#eee">1°</div>
<div class="c" style="left:635.42px;width:70px;top:788px;font-size:11px;color:#eee">1°</div>
<div class="c" style="left:705.25px;width:70px;top:788px;font-size:11px;color:#eee">1°</div>
<div class="c" style="left:775.08px;width:70px;top:788px;font-size:11px;color:#eee">1°</div>
</body></html>
